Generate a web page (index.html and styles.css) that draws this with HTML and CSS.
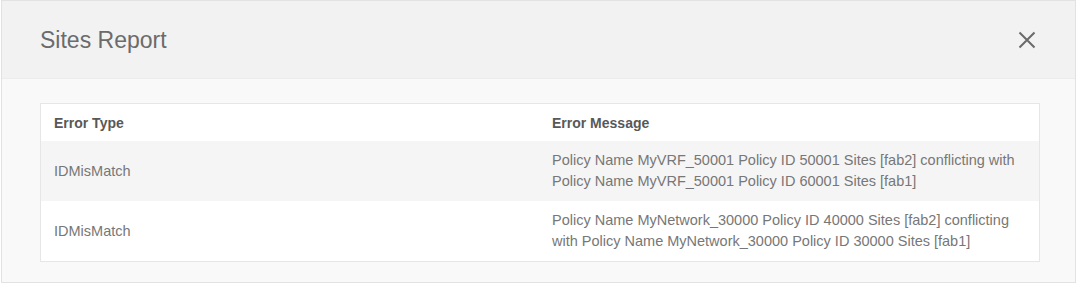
FILE: index.html
```html
<!DOCTYPE html>
<html lang="en">
<head>
    <meta charset="UTF-8">
    <meta name="viewport" content="width=device-width, initial-scale=1.0">
    <title>Sites Report</title>
    <link rel="stylesheet" href="styles.css">
</head>
<body>
  <div class="modal">
    <div class="modal-header">
      <h2>Sites Report</h2>
      <button class="close-btn" aria-label="Close">
        <svg width="18" height="18" viewBox="0 0 18 18">
          <path d="M1.5 1.5 L16.5 16.5 M16.5 1.5 L1.5 16.5" stroke="#6a6a6a" stroke-width="2" fill="none"/>
        </svg>
      </button>
    </div>

    <div class="modal-body">
      <table class="report-table">
        <thead>
          <tr>
            <th class="col-type">Error Type</th>
            <th>Error Message</th>
          </tr>
        </thead>
        <tbody>
          <tr class="striped">
            <td>IDMisMatch</td>
            <td>Policy Name MyVRF_50001 Policy ID 50001 Sites [fab2] conflicting with Policy Name MyVRF_50001 Policy ID 60001 Sites [fab1]</td>
          </tr>
          <tr>
            <td>IDMisMatch</td>
            <td>Policy Name MyNetwork_30000 Policy ID 40000 Sites [fab2] conflicting with Policy Name MyNetwork_30000 Policy ID 30000 Sites [fab1]</td>
          </tr>
        </tbody>
      </table>
    </div>
  </div>
</body>
</html>
```

FILE: styles.css
```css
/* page */
html, body {
  margin: 0;
  padding: 0;
  background: #ffffff;
  font-family: "Liberation Sans", Arial, sans-serif;
}

body {
  padding: 0 3px 2px 1px;
}

/* modal frame */
.modal {
  border: 1px solid #e2e2e2;
  background: #f9f9f9;
}

.modal-header {
  height: 77px;
  display: flex;
  align-items: center;
  justify-content: space-between;
  padding: 0 39px 0 38px;
  background: #f2f2f2;
  border-bottom: 1px solid #ececec;
}

.modal-header h2 {
  margin: 0;
  padding-top: 1px;
  font-size: 23px;
  font-weight: normal;
  color: #6b6b6b;
}

.close-btn {
  border: none;
  background: none;
  padding: 0;
  cursor: pointer;
  display: flex;
}

.modal-body {
  padding: 24px 35px 20px 38px;
}

/* table */
.report-table {
  width: 100%;
  border-collapse: collapse;
  table-layout: fixed;
  background: #ffffff;
  border: 1px solid #e6e6e6;
  font-size: 14.5px;
}

.report-table .col-type {
  width: 479px;
}

.report-table th {
  height: 37px;
  padding: 0 6px 0 13px;
  text-align: left;
  font-size: 14px;
  font-weight: bold;
  color: #585858;
}

.report-table td {
  height: 60px;
  padding: 0 6px 0 13px;
  line-height: 21px;
  color: #777777;
  vertical-align: middle;
}

.report-table .striped td {
  background: #f5f5f5;
}
```
